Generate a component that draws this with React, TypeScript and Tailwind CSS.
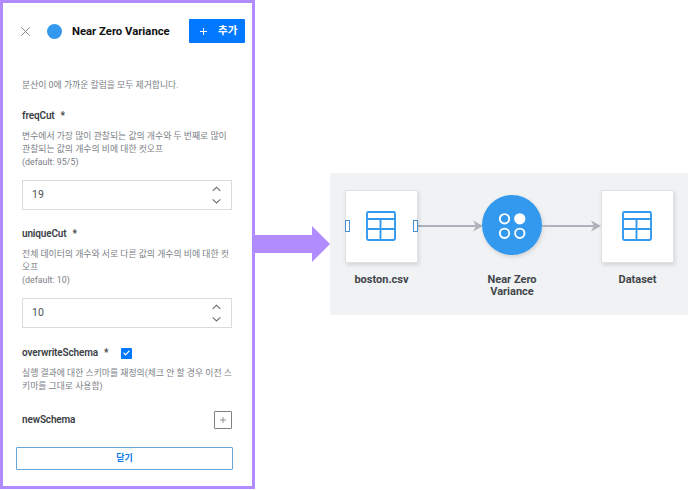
import type { ReactNode } from "react";

function Stepper() {
  return (
    <svg width="9" height="19" viewBox="0 0 9 19" fill="none" stroke="#6b6f74" strokeWidth="1.1">
      <path d="M0.7 4.9 4.5 1.3 8.3 4.9M0.7 13.3 4.5 16.9 8.3 13.3" />
    </svg>
  );
}

function Label({ children, required }: { children: ReactNode; required?: boolean }) {
  return (
    <span className="flex whitespace-pre text-[10px] leading-[14px] font-semibold tracking-[-0.15px] text-[#3c4146]">
      {children}
      {required && <span className="ml-[6px]">*</span>}
    </span>
  );
}

function Description({ lines }: { lines: string[] }) {
  return (
    <div className="text-[8.86px] leading-[13.2px] text-[#7b8086]">
      {lines.map((line) => (
        <div key={line} className="whitespace-nowrap">{line}</div>
      ))}
    </div>
  );
}

function NumberInput({ value }: { value: string }) {
  return (
    <div className="flex h-[30px] w-[210px] items-center justify-between border border-[#d9dbdd] pr-[10px] pl-[9px] text-[10.5px] text-[#4b5055]">
      <span>{value}</span>
      <Stepper />
    </div>
  );
}

function TableIcon() {
  return (
    <svg width="30" height="30" viewBox="0 0 30 30" fill="none" stroke="#3399ee" strokeWidth="1.9">
      <rect x="1" y="1" width="28" height="28" rx="1.4" />
      <path d="M1 8H29M1 18H29M14.5 8V29" />
    </svg>
  );
}

function Connector({ width }: { width: number }) {
  return (
    <svg width={width} height="12" viewBox={`0 0 ${width} 12`} className="mt-[30px] shrink-0">
      <path d={`M0 6H${width - 6}`} stroke="#adb2bc" strokeWidth="1.8" />
      <path d={`M${width - 10} 0.5 ${width} 6 ${width - 10} 11.5 ${width - 7} 6Z`} fill="#adb2bc" />
    </svg>
  );
}

function DataNode({ name, ports }: { name: string; ports?: boolean }) {
  return (
    <div className="relative w-[73px] shrink-0">
      <div className="flex h-[73px] items-center justify-center border border-[#e0e2e5] bg-white pr-px pb-px shadow-[1px_2px_4px_rgba(0,0,0,0.13)]">
        <TableIcon />
      </div>
      {ports && (
        <>
          <i className="absolute top-[30px] left-0 h-[12px] w-[5px] border border-[#4a8fd0] bg-white" />
          <i className="absolute top-[30px] right-0 h-[12px] w-[5px] border border-[#4a8fd0] bg-white" />
        </>
      )}
      <div className="mt-[11px] text-center text-[11px] leading-[12px] font-bold whitespace-nowrap text-[#42464b]">{name}</div>
    </div>
  );
}

export default function App() {
  return (
    <main className="flex h-[490px] w-[688px] overflow-hidden bg-white font-[Roboto,'Noto_Sans_CJK_KR',sans-serif]">
      <section className="h-[489px] w-[255px] shrink-0 border-[3px] border-[#b18cff]">
        <header className="mt-[16px] flex h-[24px] items-center pl-[18px]">
          <svg width="9" height="9" viewBox="0 0 9 9" stroke="#858a8f" strokeWidth="1">
            <path d="M0.3 0.3 8.7 8.7M8.7 0.3 0.3 8.7" />
          </svg>
          <span className="ml-[17px] size-[15px] rounded-full bg-[#3399ee]" />
          <h1 className="ml-[10px] w-[117px] pt-px text-[11.3px] leading-[17px] font-bold whitespace-nowrap text-[#111]">Near Zero Variance</h1>
          <button className="flex h-[24px] w-[56px] items-center rounded-[1px] bg-[#0078ff] pl-[11px] text-[10.5px] font-bold text-white">
            <svg width="7" height="7" viewBox="0 0 7 7" stroke="white" strokeWidth="1">
              <path d="M0 3.5H7M3.5 0V7" />
            </svg>
            <span className="ml-[11px] whitespace-nowrap">추가</span>
          </button>
        </header>

        <div className="pl-[19px]">
          <div className="mt-[36px] h-[13px]">
            <Description lines={["분산이 0에 가까운 칼럼을 모두 제거합니다."]} />
          </div>
          <div className="mt-[17px] h-[65px]">
            <Label required>freqCut</Label>
            <div className="mt-[7px]">
              <Description lines={["변수에서 가장 많이 관찰되는 값의 개수와 두 번째로 많이", "관찰되는 값의 개수의 비에 대한 컷오프", "(default: 95/5)"]} />
            </div>
          </div>
          <div className="mt-[6px]"><NumberInput value="19" /></div>
          <div className="mt-[17px] h-[65px]">
            <Label required>uniqueCut</Label>
            <div className="mt-[7px]">
              <Description lines={["전체 데이터의 개수와 서로 다른 값의 개수의 비에 대한 컷", "오프", "(default: 10)"]} />
            </div>
          </div>
          <div className="mt-[6px]"><NumberInput value="10" /></div>
          <div className="mt-[18px] flex h-[14px] items-center">
            <div className="w-[99px]"><Label required>overwriteSchema</Label></div>
            <span className="flex size-[11px] items-center justify-center rounded-[1px] bg-[#0078ff]">
              <svg width="7" height="6" viewBox="0 0 7 6" fill="none" stroke="white" strokeWidth="1.2">
                <path d="M0.5 2.8 2.6 4.8 6.5 0.7" />
              </svg>
            </span>
          </div>
          <div className="mt-[7px] h-[27px]">
            <Description lines={["실행 결과에 대한 스키마를 재정의(체크 안 할 경우 이전 스", "키마를 그대로 사용함)"]} />
          </div>
          <div className="mt-[17px] flex h-[18px] w-[210px] items-center justify-between">
            <Label>newSchema</Label>
            <span className="flex size-[18px] items-center justify-center rounded-[1px] border border-[#7c8084]">
              <svg width="6" height="6" viewBox="0 0 6 6" stroke="#85898d" strokeWidth="0.9">
                <path d="M0 3H6M3 0V6" />
              </svg>
            </span>
          </div>
        </div>
        <button className="mt-[18px] ml-[13px] flex h-[23px] w-[217px] items-center justify-center rounded-[1px] border border-[#65a5dc] text-[9px] font-bold text-[#0b7af0]">닫기</button>
      </section>

      <svg width="75" height="36" viewBox="0 0 75 36" className="mt-[226px] shrink-0" fill="#b18cff">
        <path d="M0 9H57V0L75 18 57 36V27H0Z" />
      </svg>

      <section className="mt-[173px] flex h-[142px] w-[358px] shrink-0 items-start bg-[#f0f2f4] pt-[17px] pl-[15px]">
        <DataNode name="boston.csv" ports />
        <Connector width={65} />
        <div className="-ml-px flex w-[60px] shrink-0 flex-col items-center">
          <div className="mt-[5px] flex size-[60px] items-center justify-center rounded-full bg-[#3399ee] shadow-[1px_2px_4px_rgba(0,0,0,0.13)]">
            <svg width="28" height="28" viewBox="0 0 28 28" fill="none" stroke="white" strokeWidth="1.9">
              <circle cx="6.5" cy="7.8" r="4.7" />
              <circle cx="21.8" cy="7.8" r="4.7" fill="white" />
              <circle cx="6.5" cy="22.3" r="4.7" />
              <circle cx="21.8" cy="22.3" r="4.7" />
            </svg>
          </div>
          <div className="mt-[19px] text-center text-[11px] leading-[12px] font-bold whitespace-nowrap text-[#42464b]">Near Zero<br />Variance</div>
        </div>
        <Connector width={59} />
        <DataNode name="Dataset" />
      </section>
    </main>
  );
}
